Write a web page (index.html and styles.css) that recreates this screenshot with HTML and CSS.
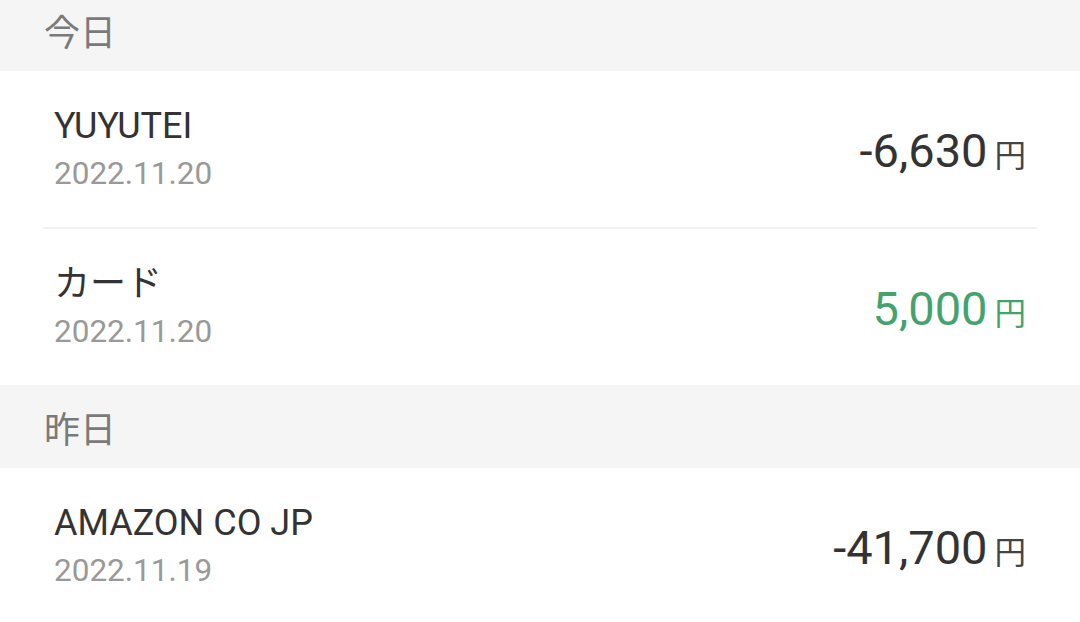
FILE: index.html
```html
<!DOCTYPE html>
<html lang="ja">
<head>
<meta charset="utf-8">
<link rel="stylesheet" href="styles.css">
</head>
<body>
<div class="list">
  <div class="section-header">今日</div>
  <div class="item">
    <div class="info">
      <div class="title">YUYUTEI</div>
      <div class="date">2022.11.20</div>
    </div>
    <div class="amount"><span class="num">-6,630</span><span class="yen">円</span></div>
  </div>
  <div class="item">
    <div class="info">
      <div class="title">カード</div>
      <div class="date">2022.11.20</div>
    </div>
    <div class="amount income"><span class="num">5,000</span><span class="yen">円</span></div>
  </div>
  <div class="section-header">昨日</div>
  <div class="item">
    <div class="info">
      <div class="title">AMAZON CO JP</div>
      <div class="date">2022.11.19</div>
    </div>
    <div class="amount"><span class="num">-41,700</span><span class="yen">円</span></div>
  </div>
</div>
</body>
</html>
```

FILE: styles.css
```css
html, body {
  margin: 0;
  padding: 0;
  background: #ffffff;
  overflow: hidden;
}
body {
  font-family: Roboto, "Noto Sans CJK JP", sans-serif;
  width: 1080px;
  height: 622px;
}
.list {
  margin-top: -12px;
  display: flex;
  flex-direction: column;
}
.section-header {
  height: 83px;
  background: #f5f5f5;
  color: #7a7a7a;
  font-size: 36px;
  display: flex;
  align-items: center;
  padding-left: 44px;
  font-family: "Noto Sans CJK JP", sans-serif;
}
.item {
  margin: 0 43px;
  padding: 33px 11px 33px;
  display: flex;
  align-items: center;
  justify-content: space-between;
}
.item + .item {
  border-top: 2px solid #f2f2f2;
}
.title {
  font-size: 36px;
  line-height: 44px;
  color: #333333;
}
.date {
  font-size: 31.5px;
  line-height: 40px;
  margin-top: 6px;
  color: #999999;
}
.amount {
  display: flex;
  align-items: baseline;
  line-height: 52px;
  margin-top: 6px;
  color: #333333;
}
.amount .num {
  font-size: 47px;
}
.amount .yen {
  font-size: 31.5px;
  margin-left: 7px;
  font-family: "Noto Sans CJK JP", sans-serif;
  color: #444444;
}
.amount.income {
  color: #44a36c;
}
.amount.income .yen {
  color: #44a36c;
}
```
